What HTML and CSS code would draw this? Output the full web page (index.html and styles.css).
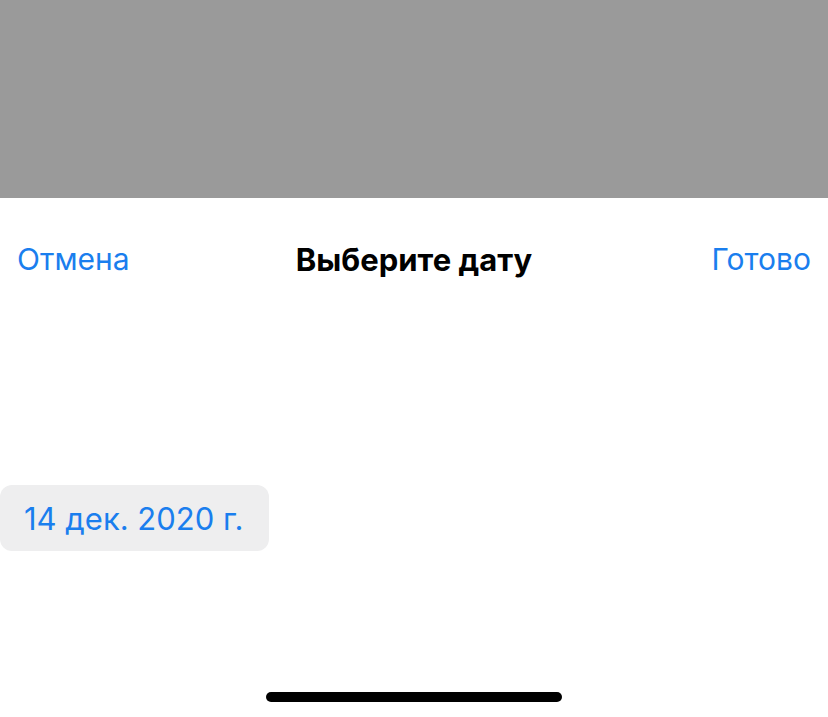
FILE: index.html
```html
<!DOCTYPE html>
<html lang="ru">

<head>
    <meta charset="UTF-8">
    <meta name="viewport" content="width=device-width, initial-scale=1.0">
    <title>Выберите дату</title>
    <link rel="stylesheet" href="styles.css">
</head>

<body>
    <div class="backdrop"></div>

    <div class="sheet">
        <div class="toolbar">
            <button class="link">Отмена</button>
            <h1 class="title">Выберите дату</h1>
            <button class="link done">Готово</button>
        </div>

        <div class="picker">
            <button class="date">14 дек. 2020 г.</button>
        </div>

        <div class="home-bar"></div>
    </div>
</body>

</html>
```

FILE: styles.css
```css
* {
    box-sizing: border-box;
}

body {
    margin: 0;
    width: 828px;
    height: 717px;
    overflow: hidden;
    font-family: Inter, "Noto Sans", sans-serif;
    background: white;
    display: flex;
    flex-direction: column;
}

.backdrop {
    height: 198px;
    background: #9a9a9a;
}

.sheet {
    flex: 1;
    display: flex;
    flex-direction: column;
}

.toolbar {
    display: grid;
    grid-template-columns: 1fr auto 1fr;
    align-items: center;
    height: 122px;
    padding: 0 17px;
}

.link {
    justify-self: start;
    border: none;
    background: none;
    padding: 0;
    font-family: inherit;
    font-size: 30px;
    color: #1a7eee;
}

.link.done {
    justify-self: end;
}

.title {
    margin: 0;
    font-size: 31px;
    font-weight: 700;
    color: black;
}

.picker {
    padding-top: 165px;
    flex: 1;
}

.date {
    border: none;
    background: #eeeeef;
    border-radius: 12px;
    height: 66px;
    padding: 0 25px 0 24px;
    font-family: inherit;
    font-size: 31px;
    color: #1a7eee;
}

.home-bar {
    align-self: center;
    width: 296px;
    height: 10px;
    border-radius: 5px;
    background: black;
    margin-bottom: 15px;
}
```
